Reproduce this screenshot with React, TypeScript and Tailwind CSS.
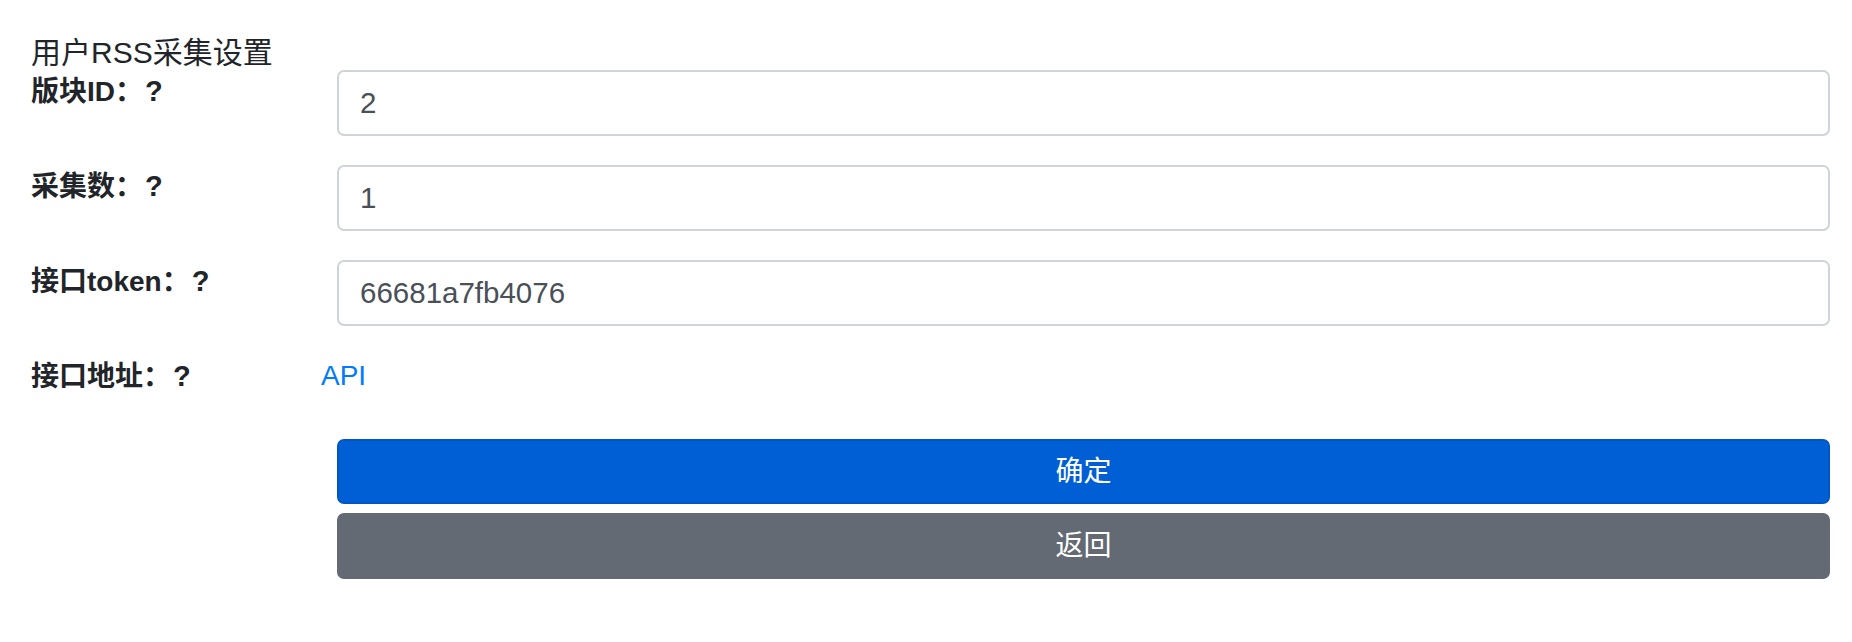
const font = {
  fontFamily: '"Liberation Sans", "Noto Sans CJK SC", sans-serif',
};

type FieldProps = {
  label: string;
  value: string;
};

const Field = ({ label, value }: FieldProps) => (
  <div className="grid grid-cols-[306px_1fr] mb-[29px]">
    <label className="font-bold text-[28px] leading-[42px] text-[#212529]">
      {label}：<span className="ml-[2px] text-[29px]">?</span>
    </label>
    <input
      readOnly
      value={value}
      className="h-[66px] w-full rounded-[7px] border-2 border-[#ced4da] bg-white px-[21px] text-[29.5px] text-[#495057] outline-none"
    />
  </div>
);

const App = () => {
  return (
    <div
      className="min-h-screen bg-white pt-[36px] pl-[31px] pr-[22px]"
      style={font}
    >
      <div className="text-[30px] leading-[34px] text-[#212529]">
        用户RSS采集设置
      </div>
      <Field label="版块ID" value="2" />
      <Field label="采集数" value="1" />
      <Field label="接口token" value="66681a7fb4076" />
      <div className="grid grid-cols-[306px_1fr] h-[84px]">
        <label className="font-bold text-[28px] leading-[42px] text-[#212529]">
          接口地址：<span className="ml-[2px] text-[29px]">?</span>
        </label>
        <div className="-ml-[16px] text-[28px] leading-[42px]">
          <a href="#" className="text-[#007bff]">
            API
          </a>
        </div>
      </div>
      <div className="grid grid-cols-[306px_1fr]">
        <div></div>
        <div className="flex flex-col gap-[9px]">
          <button className="h-[65px] w-full rounded-[7px] border-2 border-[#0057c2] bg-[#005fd4] text-[28px] text-white">
            确定
          </button>
          <button className="h-[66px] w-full rounded-[7px] border-2 border-[#636a73] bg-[#636a73] text-[28px] text-white">
            返回
          </button>
        </div>
      </div>
    </div>
  );
};

export default App;
